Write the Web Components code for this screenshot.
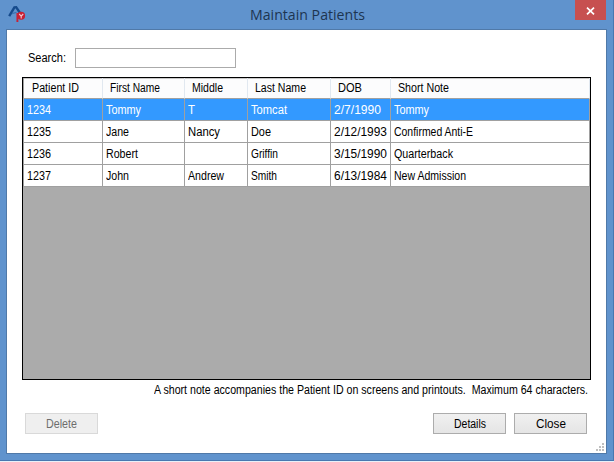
<!DOCTYPE html>
<html lang="en">
<head>
<meta charset="utf-8">
<title>Maintain Patients</title>
<style>
html,body{margin:0;height:100%;overflow:hidden;background:#e9f0f8}
body{font:12.5px/16px "Liberation Sans",Arial,sans-serif;color:#000}
</style>
</head>
<body>
<patient-window></patient-window>
<script>
const define = (name, html, setup) => customElements.define(name, class extends HTMLElement {
  connectedCallback() {
    if (this.shadowRoot) return;
    this.attachShadow({mode: 'open'}).innerHTML = html;
    if (setup) setup.call(this, this.shadowRoot);
  }
});

// A text run condensed to the width given in its "w" attribute.
define('fit-text', `<style>
:host{display:flex;flex:none;white-space:pre}
span{display:block;flex:none;transform-origin:0 50%}
</style><span><slot></slot></span>`, function (root) {
  const w = +this.getAttribute('w'), span = root.querySelector('span');
  const natural = span.getBoundingClientRect().width;
  this.style.width = w + 'px';
  span.style.marginRight = (w - natural) + 'px';
  span.style.transform = `scaleX(${w / natural})`;
});

define('app-logo', `<style>:host{display:block;width:18px;height:18px}svg{display:block}</style>
<svg width="18" height="18" viewBox="0 0 18 18">
<path d="M1.2 11.2 6.4 2.4 8.2 2.2 12 8" fill="none" stroke="#164b8c" stroke-width="2.4"/>
<path d="M4 8.6l4.5-1.2" stroke="#3b72b0" stroke-width="1.3"/>
<circle cx="13.1" cy="10.8" r="4" fill="#c92034"/>
<path d="M9.4 8v9" stroke="#c92034" stroke-width="1.9"/>
<path d="m11.2 9 2 2.1 2-2.1m-2 2.1v2.3" fill="none" stroke="#f0c4cc" stroke-width="1.1"/>
</svg>`);

define('title-bar', `<style>
:host{display:flex;height:29px;box-sizing:border-box;padding-left:8px}
app-logo{margin-top:5px}
.t{flex:1;padding:4px 0 0 224px;font:15px/20px "Open Sans","Noto Sans",sans-serif;color:#1d3550}
.x{width:31px;height:20px;margin-right:7px;background:#c75050;display:flex;align-items:center;justify-content:center}
.x svg{margin-top:1px}
</style><app-logo></app-logo><div class="t"><fit-text w="115"><slot></slot></fit-text></div>
<div class="x"><svg width="9" height="8" viewBox="0 0 9 8"><path d="M1 .6 8 7.4M8 .6 1 7.4" stroke="#fff" stroke-width="1.7"/></svg></div>`);

define('search-field', `<style>
:host{display:flex;align-items:center;height:20px;gap:9px}
i{display:block;width:161px;height:20px;box-sizing:border-box;border:1px solid #ababab;background:#fff}
</style><fit-text w="38"><slot></slot></fit-text><i></i>`);

define('push-button', `<style>
:host{display:flex;justify-content:center;align-items:center;box-sizing:border-box;width:73px;height:21px;padding-top:1px;border:1px solid #acacac;background:linear-gradient(#f0f0f0,#e5e5e5)}
:host([disabled]){background:#efefef;border-color:#d9d9d9;color:#6d6d6d}
</style><slot></slot>`);

define('data-grid', `<style>
:host{display:block;box-sizing:border-box;width:569px;height:303px;border:1px solid #000;background:#ababab}
.r{display:grid;grid-template-columns:80px 82px 63px 83px 60px 199px;height:22px}
.c{box-sizing:border-box;border-right:1px solid #a0a0a0;border-bottom:1px solid #a0a0a0;background:#fff;display:flex;align-items:center;padding:0 0 0 3px}
.c:first-child{padding-left:4px;box-shadow:inset 1px 0 #a0a0a0}
.h{height:21px}
.h .c{border-right-color:#e1e8f0;background:linear-gradient(#c8c8c8 0 1px,#fcfcfd 1px);padding-left:7px}
.h .c:first-child{padding-left:9px}
.s .c{background:#3399ff;color:#fff}
</style>`, root => {
  const rows = [
    [['Patient ID',47],['First Name',50],['Middle',31],['Last Name',51],['DOB',24],['Short Note',51]],
    [['1234',24],['Tommy',35],['T',7],['Tomcat',36],['2/7/1990',47],['Tommy',35]],
    [['1235',24],['Jane',23],['Nancy',32],['Doe',20],['2/12/1993',53],['Confirmed Anti-E',79]],
    [['1236',24],['Robert',32],['',0],['Griffin',27],['3/15/1990',53],['Quarterback',59]],
    [['1237',24],['John',23],['Andrew',36],['Smith',26],['6/13/1984',53],['New Admission',72]]
  ];
  root.innerHTML += rows.map((r, i) => `<div class="r ${i === 0 ? 'h' : i === 1 ? 's' : ''}">` +
    r.map(([t, w]) => `<div class="c">${t && `<fit-text w="${w}">${t}</fit-text>`}</div>`).join('') + '</div>').join('');
});

define('size-grip', `<style>:host{display:block;width:8px;height:8px}svg{display:block}</style>
<svg width="8" height="8" fill="#bfbfbf"><path d="M6 0h2v2H6zM3 3h2v2H3zM6 3h2v2H6zM0 6h2v2H0zM3 6h2v2H3zM6 6h2v2H6z"/></svg>`);

define('patient-window', `<style>
:host{display:flex;flex-direction:column;box-sizing:border-box;width:614px;height:461px;background:#6093cd;border-right:1px solid #4878b0;border-bottom:1px solid #4878b0}
main{box-sizing:border-box;width:601px;height:425px;margin-left:6px;border:1px solid #5079a8;background:#fff;display:flex;flex-direction:column}
search-field{margin:18px 0 9px 21px}
data-grid{margin-left:15px}
.n{margin:2px 0 0 147px}
.b{display:flex;gap:8px;margin:15px 19px 0 18px}
.b > :first-child{margin-right:auto}
size-grip{margin:9px 2px 0 auto}
</style>
<title-bar>Maintain Patients</title-bar>
<main>
<search-field>Search:</search-field>
<data-grid></data-grid>
<fit-text class="n" w="434">A short note accompanies the Patient ID on screens and printouts.  Maximum 64 characters.</fit-text>
<div class="b"><push-button disabled><fit-text w="31">Delete</fit-text></push-button><push-button><fit-text w="32">Details</fit-text></push-button><push-button><fit-text w="30">Close</fit-text></push-button></div>
<size-grip></size-grip>
</main>`);
</script>
</body>
</html>
